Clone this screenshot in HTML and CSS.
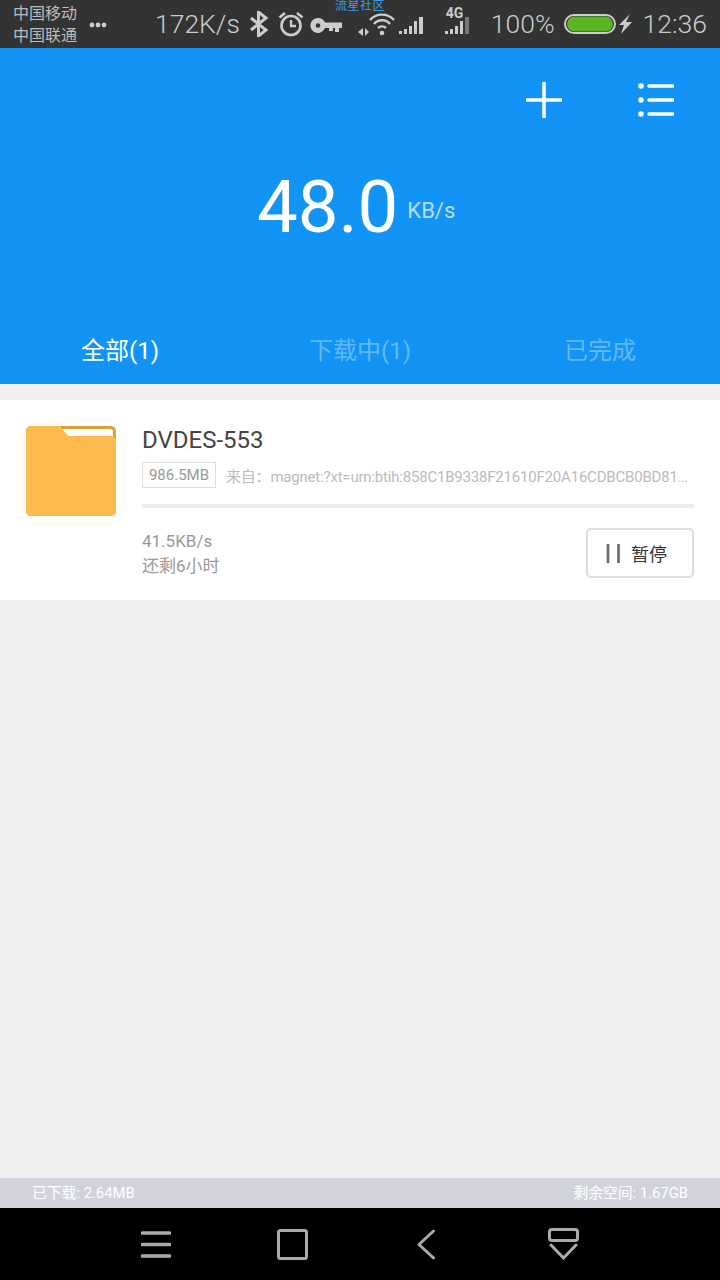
FILE: index.html
```html
<!DOCTYPE html>
<html lang="zh-CN">
<head>
    <meta charset="UTF-8">
    <meta name="viewport" content="width=device-width, initial-scale=1.0">
    <title>下载</title>
    <link rel="stylesheet" href="styles.css">
</head>
<body>
    <div class="page">
        <div class="statusbar">
            <div class="carrier">
                <span>中国移动</span>
                <span>中国联通</span>
            </div>
            <svg class="st-dots" width="18" height="6" viewBox="0 0 18 6"><circle cx="3" cy="3" r="2.400"/><circle cx="9" cy="3" r="2.400"/><circle cx="15" cy="3" r="2.400"/></svg>
            <span class="st-text st-net">172K/s</span>
            <svg class="st-bt" width="20" height="26" viewBox="0 0 20 26"><path d="M2 7l15 12-7.500 6V1L17 7 2 19" fill="none" stroke="#ccc" stroke-width="3"/></svg>
            <svg class="st-alarm" width="26" height="26" viewBox="0 0 26 26"><circle cx="13" cy="14.500" r="9.500" fill="none" stroke="#ccc" stroke-width="2.600"/><path d="M13 9v6h5" fill="none" stroke="#ccc" stroke-width="2.400"/><path d="M1.500 6.500L7 2M24.500 6.500L19 2" fill="none" stroke="#ccc" stroke-width="2.600"/></svg>
            <svg class="st-key" width="32" height="15" viewBox="0 0 32 15"><path fill-rule="evenodd" d="M8 0a7.500 7.500 0 0 1 7 4.500h17v5.500h-3v4h-4v-4h-2v3h-4v-3h-4A7.500 7.500 0 1 1 8 0zm0 5.200a2.300 2.300 0 1 0 0 4.600 2.300 2.300 0 0 0 0-4.600z"/></svg>
            <svg class="st-wifi" width="38" height="26" viewBox="0 0 38 26"><path d="M1 21l5-4v8zM8 17l4 4-4 4z"/><path d="M13 9a16 16 0 0 1 24 0M17 13a10.500 10.500 0 0 1 16 0M21 17a6 6 0 0 1 8 0" fill="none" stroke="#ccc" stroke-width="2.400"/><circle cx="25" cy="22" r="2.300"/></svg>
            <svg class="st-signal" width="25" height="20" viewBox="0 0 25 20"><path d="M0 17h3v3H0zM5 15h3v5H5zM10 12h3v8h-3zM15 7h3v13h-3zM20 3h4v17h-4z"/></svg>
            <div class="st-4g">
                <span class="st-4g-label">4G</span>
                <svg width="25" height="18" viewBox="0 0 25 18"><path d="M0 15h3v3H0zM5 13h3v5H5zM10 10h3v8h-3zM15 5h3v13h-3z"/><path class="st-dim" d="M20 1h4v17h-4z"/></svg>
            </div>
            <span class="st-text st-pct">100%</span>
            <svg class="st-batt" width="69" height="22" viewBox="0 0 69 22"><rect x="1" y="2" width="50" height="18" rx="9" fill="none" stroke="#ccc" stroke-width="2"/><rect x="3" y="3.500" width="46" height="15" rx="7.500" class="st-batt-fill"/><path d="M66 1L55 12h5l-3 9 11-12h-6z"/></svg>
            <span class="st-text st-time">12:36</span>
            <span class="watermark">流星社区</span>
        </div>

        <header class="header">
            <div class="header-actions">
                <svg width="36" height="36" viewBox="0 0 36 36"><path d="M18 1v34M1 18h34" fill="none" stroke="#fff" stroke-width="3.500" stroke-linecap="round"/></svg>
                <svg width="36" height="36" viewBox="0 0 36 36" fill="#fff"><circle cx="3" cy="4" r="2.800"/><circle cx="3" cy="18" r="2.800"/><circle cx="3" cy="32" r="2.800"/><path d="M11 4h24M11 18h24M11 32h24" fill="none" stroke="#fff" stroke-width="3.500" stroke-linecap="round"/></svg>
            </div>
            <div class="speed">
                <span class="speed-num">48.0</span>
                <span class="speed-unit">KB/s</span>
            </div>
            <nav class="tabs">
                <span class="tab active">全部(1)</span>
                <span class="tab">下载中(1)</span>
                <span class="tab">已完成</span>
            </nav>
        </header>

        <main class="content">
            <div class="task">
                <svg class="folder" width="90" height="90" viewBox="0 0 90 90">
                    <rect width="90" height="90" rx="5" fill="#dea132"/>
                    <path d="M36 3h48a3 3 0 0 1 3 3v5H42z" fill="#fff"/>
                    <path d="M0 5a5 5 0 0 1 5-5h29l8 10h43a5 5 0 0 1 5 5v70a5 5 0 0 1-5 5H5a5 5 0 0 1-5-5z" fill="#ffba4d"/>
                </svg>
                <div class="task-body">
                    <div class="task-name">DVDES-553</div>
                    <div class="task-meta">
                        <span class="task-size">986.5MB</span>
                        <span class="task-source">来自：magnet:?xt=urn:btih:858C1B9338F21610F20A16CDBCB0BD81…</span>
                    </div>
                    <div class="progress"></div>
                    <div class="task-foot">
                        <div class="task-stats">
                            <div>41.5KB/s</div>
                            <div>还剩6小时</div>
                        </div>
                        <button class="pause-btn" type="button">
                            <svg width="14" height="19" viewBox="0 0 14 19"><path d="M2 0v19M12.500 0v19" fill="none" stroke="#666" stroke-width="2.600"/></svg>
                            <span>暂停</span>
                        </button>
                    </div>
                </div>
            </div>
        </main>

        <div class="storage">
            <span>已下载: 2.64MB</span>
            <span>剩余空间: 1.67GB</span>
        </div>

        <div class="navbar">
            <svg width="30" height="27" viewBox="0 0 30 27"><path d="M1.500 2h27M1.500 13.500h27M1.500 25h27" fill="none" stroke="#aaa" stroke-width="3.600" stroke-linecap="round"/></svg>
            <svg width="31" height="31" viewBox="0 0 31 31"><rect x="1.500" y="1.500" width="28" height="28" rx="2" fill="none" stroke="#aaa" stroke-width="3"/></svg>
            <svg class="nav-back" width="20" height="31" viewBox="0 0 20 31"><path d="M17.500 2L3 15.500 17.500 29" fill="none" stroke="#aaa" stroke-width="3" stroke-linecap="round" stroke-linejoin="round"/></svg>
            <svg class="nav-hide" width="31" height="32" viewBox="0 0 31 32"><rect x="1.500" y="1.500" width="28" height="11" rx="2.500" fill="none" stroke="#aaa" stroke-width="3"/><path d="M3 17l12.500 13L28 17" fill="none" stroke="#aaa" stroke-width="3" stroke-linecap="round"/></svg>
        </div>
    </div>
</body>
</html>
```

FILE: styles.css
```css
* {
    box-sizing: border-box;
}

body {
    margin: 0;
    font-family: Roboto, "Noto Sans CJK SC", sans-serif;
    background-color: #eeeff1;
}

.page {
    display: flex;
    flex-direction: column;
    width: 720px;
    height: 1280px;
    overflow: hidden;
}

/* status bar */
.statusbar {
    position: relative;
    display: flex;
    align-items: center;
    flex: 0 0 48px;
    padding-left: 13px;
    background-color: #333;
    color: #ccc;
    fill: #ccc;
}

.statusbar svg {
    flex: none;
}

.carrier {
    display: flex;
    flex-direction: column;
    padding-top: 2px;
    font-size: 16px;
    line-height: 22px;
    color: #bbb;
}

.st-dots {
    margin-left: 12px;
    margin-top: 1px;
}

.st-text {
    font-size: 26.500px;
    line-height: 48px;
    font-weight: 300;
}

.st-net {
    margin-left: 48px;
}

.st-bt,
.st-alarm {
    margin-left: 9px;
}

.st-key {
    margin-left: 6px;
    margin-top: 3px;
}

.st-wifi {
    margin-left: 15px;
}

.st-signal {
    margin-left: 4px;
}

.st-4g {
    display: flex;
    flex-direction: column;
    align-items: flex-start;
    margin-left: 21px;
    margin-top: -7px;
}

.st-4g-label {
    margin-left: 1px;
    margin-bottom: -3px;
    font-size: 14px;
    line-height: 12px;
    font-weight: 700;
}

.st-dim {
    fill: #777;
}

.st-pct {
    margin-left: 21px;
}

.st-batt {
    margin-left: 9px;
}

.st-batt-fill {
    fill: #5bb51f;
}

.st-time {
    margin-left: 10px;
}

.watermark {
    position: absolute;
    left: 335px;
    top: 0;
    font-size: 12px;
    line-height: 13px;
    letter-spacing: 0.5px;
    color: #3b9fe8;
}

/* header */
.header {
    display: flex;
    flex-direction: column;
    flex: 0 0 336px;
    background-color: #1294f6;
    color: #fff;
}

.header-actions {
    display: flex;
    justify-content: flex-end;
    gap: 76px;
    padding: 34px 46px 0 0;
}

.speed {
    display: flex;
    align-items: baseline;
    margin-top: 45px;
    padding-left: 257px;
}

.speed-num {
    font-size: 72.500px;
    line-height: 90px;
}

.speed-unit {
    position: relative;
    top: -14px;
    margin-left: 9px;
    font-size: 22px;
    color: rgba(255, 255, 255, 0.7);
}

.tabs {
    display: grid;
    grid-template-columns: repeat(3, 1fr);
    margin-top: auto;
    padding-bottom: 15px;
}

.tab {
    text-align: center;
    font-size: 24px;
    line-height: 36px;
    color: rgba(255, 255, 255, 0.36);
}

.tab.active {
    color: #fff;
}

/* list */
.content {
    flex: 1;
    padding-top: 16px;
}

.task {
    display: flex;
    height: 200px;
    padding: 26px 26px 0;
    background-color: #fff;
}

.folder {
    flex: none;
}

.task-body {
    flex: 1;
    min-width: 0;
    margin-left: 26px;
}

.task-name {
    margin-top: -1px;
    font-size: 24px;
    line-height: 30px;
    color: #444;
}

.task-meta {
    display: flex;
    align-items: center;
    margin-top: 7px;
}

.task-size {
    flex: none;
    width: 74px;
    height: 26px;
    border: 1px solid #ddd;
    text-align: center;
    font-size: 15px;
    line-height: 25px;
    color: #999;
}

.task-source {
    margin-left: 10px;
    white-space: nowrap;
    letter-spacing: -0.2px;
    font-family: Roboto, "Noto Sans CJK TC", sans-serif;
    font-size: 15px;
    color: #bbb;
}

.progress {
    height: 4px;
    margin-top: 16px;
    background-color: #eee;
}

.task-foot {
    display: flex;
    justify-content: space-between;
    margin-top: 20px;
}

.task-stats {
    margin-top: 1px;
    font-size: 17px;
    line-height: 25px;
    color: #999;
}

.pause-btn {
    display: flex;
    align-items: center;
    gap: 11px;
    width: 108px;
    height: 50px;
    padding: 0 0 0 18px;
    border: 2px solid #ddd;
    border-radius: 5px;
    background-color: #fff;
    font-family: inherit;
    font-size: 18px;
    color: #333;
}

/* footer */
.storage {
    display: flex;
    justify-content: space-between;
    flex: 0 0 30px;
    padding: 0 32px;
    background-color: #d1d2db;
    font-size: 14.800px;
    line-height: 30px;
    color: #fff;
}

.navbar {
    display: flex;
    align-items: center;
    flex: 0 0 72px;
    gap: 106px;
    padding-left: 141px;
    background-color: #000;
}

.nav-back {
    margin-left: 2px;
}

.nav-hide {
    margin-left: 6px;
}
```
